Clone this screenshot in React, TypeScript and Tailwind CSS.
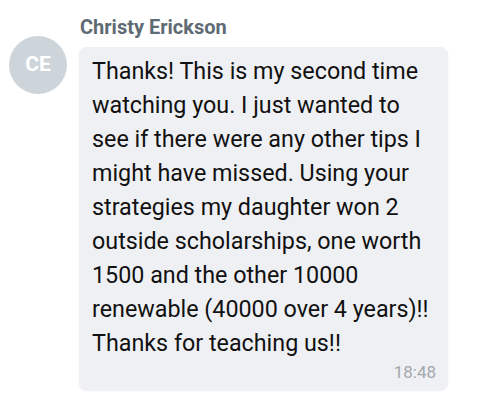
import React from "react";

export default function App() {
  return (
    <div className="w-[500px] h-[404px] bg-white" style={{ fontFamily: "Roboto, 'Liberation Sans', sans-serif" }}>
      <div className="flex pt-[15px] pl-[9px] gap-[12px]">
        <div className="mt-[21px] w-[58px] h-[58px] shrink-0 rounded-full bg-[#cdd5da] flex items-center justify-center text-white font-bold text-[21px]">
          CE
        </div>
        <div className="flex flex-col">
          <div className="pl-[1px] text-[20px] leading-[24px] font-bold text-[#5f6b74]">Christy Erickson</div>
          <div className="mt-[8px] w-[369px] rounded-[8px] bg-[#eff0f4] shadow-[0_1px_2px_rgba(0,0,0,0.08)] pl-[13px] pr-[10px] pt-[7px] pb-[8px]">
            <p className="text-[23.3px] leading-[34px] text-[#111111]">
              Thanks! This is my second time watching you. I just wanted to see if there were any other tips I might have missed. Using your strategies my daughter won 2 outside scholarships, one worth 1500 and the other 10000 renewable (40000 over 4 years)!! Thanks for teaching us!!
            </p>
            <div className="text-right text-[17px] leading-[20px] text-[#a3a7ab] mt-[2px] pr-[2px]">18:48</div>
          </div>
        </div>
      </div>
    </div>
  );
}
